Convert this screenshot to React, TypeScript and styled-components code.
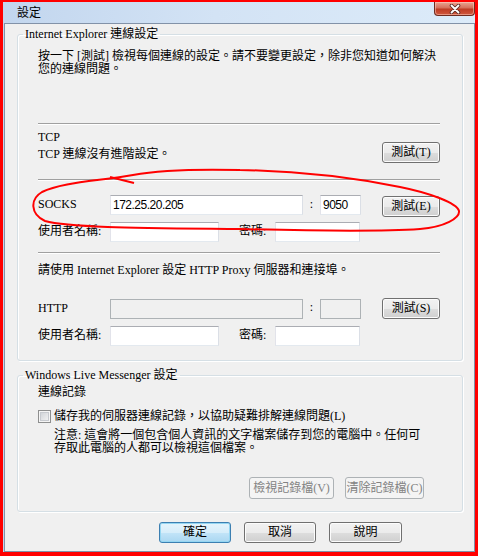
import React from "react";
import styled, { createGlobalStyle } from "styled-components";

const UI_FONT = `"Liberation Serif", "Noto Sans CJK TC", serif`;

const GlobalStyle = createGlobalStyle`
	html, body {
		margin: 0;
		padding: 0;
		background: #fff;
	}
	body {
		font-family: ${UI_FONT};
		font-size: 12px;
		color: #000;
	}
`;

const Page = styled.div`
	position: relative;
	width: 478px;
	height: 556px;
`;

const Window = styled.div`
	box-sizing: border-box;
	width: 478px;
	height: 556px;
	border-style: solid;
	border-color: #ff0000;
	border-width: 2px 3px 4px 3px;
	background: linear-gradient(to right, #c2d6ee 0%, #d3e3f5 45%, #dcebf9 100%);
	display: flex;
	flex-direction: column;
`;

const TitleBar = styled.div`
	height: 21px;
	display: flex;
	align-items: flex-start;
	padding-left: 14px;
`;

const Caption = styled.div`
	padding-top: 3px;
	line-height: 13px;
	font-family: "Noto Sans CJK TC", sans-serif;
	font-size: 12px;
`;

const CloseButton = styled.div`
	box-sizing: border-box;
	margin-left: auto;
	width: 41px;
	height: 14px;
	border: 1px solid #6e2b20;
	border-top: none;
	border-radius: 0 0 4px 4px;
	background: linear-gradient(#e8a593 0%, #d5705b 45%, #bf3c24 55%, #d0583e 100%);
	box-shadow: inset 0 0 0 1px rgba(255, 210, 195, 0.5);
	display: flex;
	align-items: center;
	justify-content: center;
`;

const Client = styled.div`
	flex: 1;
	margin-left: 1px;
	border: 1px solid #8292a8;
	background: #f0f0f0;
	padding: 4px 11px 0 12px;
	display: flex;
	flex-direction: column;
`;

const Group = styled.fieldset<{ $gap?: number }>`
	margin: ${(p) => p.$gap ?? 0}px 0 0 0;
	padding: 0;
	min-width: 0;
	border: 1px solid #d5dfe5;
	border-radius: 3px;
	box-shadow: inset 1px 1px 0 #fff, 1px 1px 0 #fff;
`;

const GroupTitle = styled.legend`
	margin-left: 5px;
	padding: 0 2px;
	line-height: 13px;
	font-size: 12px;
`;

const GroupBody = styled.div<{ $top: number; $bottom: number }>`
	padding: ${(p) => p.$top}px 22px ${(p) => p.$bottom}px 20px;
	display: flex;
	flex-direction: column;
`;

const Text = styled.div<{ $gap?: number; $lh?: number; $indent?: number }>`
	margin-top: ${(p) => p.$gap ?? 0}px;
	padding-left: ${(p) => p.$indent ?? 0}px;
	line-height: ${(p) => p.$lh ?? 13}px;
	white-space: nowrap;
`;

const Separator = styled.div<{ $gap: number }>`
	margin-top: ${(p) => p.$gap}px;
	border-top: 1px solid #a0a0a0;
	border-bottom: 1px solid #fff;
`;

const Row = styled.div<{ $gap: number }>`
	margin-top: ${(p) => p.$gap}px;
	display: flex;
	align-items: flex-start;
`;

const Label = styled.span<{ $width: number; $shift?: number; $lift?: number }>`
	width: ${(p) => p.$width}px;
	margin-left: ${(p) => p.$shift ?? 0}px;
	margin-top: ${(p) => p.$lift ?? 3}px;
	line-height: 13px;
	white-space: nowrap;
`;

const Colon = styled.span`
	width: 17px;
	text-align: center;
	margin-top: 3px;
	line-height: 13px;
`;

const TextBox = styled.input<{ $width: number; $offset?: number }>`
	box-sizing: border-box;
	width: ${(p) => p.$width}px;
	height: 20px;
	margin: ${(p) => p.$offset ?? 0}px 0 0 0;
	padding: 0 2px;
	border: 1px solid;
	border-color: #abadb3 #dbdfe6 #e3e9ef #e2e3ea;
	background: #fff;
	font-family: "Liberation Sans", "Noto Sans CJK TC", sans-serif;
	font-size: 12px;
	letter-spacing: -0.5px;
	color: #000;
	outline: none;

	&:disabled {
		background: #f0f0f0;
		border-color: #adb2b5;
	}
`;

const Button = styled.button<{ $width: number; $height?: number; $primary?: boolean; $offset?: number }>`
	box-sizing: border-box;
	width: ${(p) => p.$width}px;
	height: ${(p) => p.$height ?? 21}px;
	margin: ${(p) => p.$offset ?? 0}px 0 0 0;
	padding: 0;
	font-family: ${UI_FONT};
	font-size: 12px;
	line-height: 13px;
	color: #000;
	border: 1px solid ${(p) => (p.$primary ? "#3c7fb1" : "#707070")};
	border-radius: 3px;
	background: ${(p) =>
		p.$primary
			? "linear-gradient(#e5f4fc 0%, #d6edfa 50%, #c2e4f8 51%, #aad7f1 100%)"
			: "linear-gradient(#f2f2f2 0%, #ebebeb 50%, #dddddd 51%, #cfcfcf 100%)"};
	box-shadow: inset 0 0 0 1px ${(p) => (p.$primary ? "#95d6f2" : "#fcfcfc")};

	&:disabled {
		border-color: #adb2b5;
		background: #f4f4f4;
		box-shadow: inset 0 0 0 1px #f4f4f4;
		color: #838383;
	}
`;

const PushRight = styled.div`
	margin-left: auto;
	display: flex;
`;

const CheckRow = styled.div<{ $gap: number }>`
	margin-top: ${(p) => p.$gap}px;
	display: flex;
	align-items: center;
	gap: 3px;
	line-height: 13px;
	white-space: nowrap;
`;

const CheckBox = styled.span`
	box-sizing: border-box;
	width: 13px;
	height: 13px;
	border: 1px solid #8e8f8f;
	background: linear-gradient(135deg, #c9cdd2 0%, #e6e7e9 60%, #f7f7f7 100%);
	box-shadow: inset 0 0 0 1px #f5f5f5, inset 0 0 0 2px #c7cacf;
`;

const ButtonBar = styled.div<{ $gap: number; $pad: number; $right?: boolean }>`
	margin-top: ${(p) => p.$gap}px;
	display: flex;
	justify-content: ${(p) => (p.$right ? "flex-end" : "flex-start")};
	padding-left: ${(p) => (p.$right ? 0 : p.$pad)}px;
	padding-right: ${(p) => (p.$right ? p.$pad : 0)}px;
	gap: ${(p) => (p.$right ? 11 : 13)}px;
`;

const Annotation = styled.svg`
	position: absolute;
	top: 0;
	left: 0;
	pointer-events: none;
`;

const App: React.FC = () => {
	return (
		<Page>
			<GlobalStyle />
			<Window>
				<TitleBar>
					<Caption>設定</Caption>
					<CloseButton>
						<svg width="14" height="10" viewBox="0 0 14 10">
							<path d="M3.5 1.5 L10.5 8.5 M10.5 1.5 L3.5 8.5" stroke="#5a2c26" strokeWidth="3.6" strokeLinecap="round" />
							<path d="M3.5 1.5 L10.5 8.5 M10.5 1.5 L3.5 8.5" stroke="#fff" strokeWidth="1.8" strokeLinecap="round" />
						</svg>
					</CloseButton>
				</TitleBar>
				<Client>
					<Group>
						<GroupTitle>Internet Explorer 連線設定</GroupTitle>
						<GroupBody $top={9} $bottom={14}>
							<Text>
								按一下 [測試] 檢視每個連線的設定。請不要變更設定，除非您知道如何解決
								<br />
								您的連線問題。
							</Text>
							<Separator $gap={47} />
							<Row $gap={4}>
								<Text $lh={17}>
									TCP
									<br />
									TCP 連線沒有進階設定。
								</Text>
								<PushRight>
									<Button $width={58} $offset={13}>測試(T)</Button>
								</PushRight>
							</Row>
							<Separator $gap={16} />
							<Row $gap={14}>
								<Label $width={72}>SOCKS</Label>
								<TextBox $width={193} value="172.25.20.205" readOnly />
								<Colon>:</Colon>
								<TextBox $width={41} value="9050" readOnly />
								<PushRight>
									<Button $width={58} $offset={1}>測試(E)</Button>
								</PushRight>
							</Row>
							<Row $gap={5}>
								<Label $width={72}>使用者名稱:</Label>
								<TextBox $width={109} value="" readOnly />
								<Label $width={36} $shift={20}>密碼:</Label>
								<TextBox $width={85} value="" readOnly />
							</Row>
							<Separator $gap={10} />
							<Text $gap={10}>請使用 Internet Explorer 設定 HTTP Proxy 伺服器和連接埠。</Text>
							<Row $gap={21}>
								<Label $width={72} $lift={4}>HTTP</Label>
								<TextBox $width={193} $offset={1} value="" disabled />
								<Colon>:</Colon>
								<TextBox $width={41} $offset={1} value="" disabled />
								<PushRight>
									<Button $width={58}>測試(S)</Button>
								</PushRight>
							</Row>
							<Row $gap={7}>
								<Label $width={72}>使用者名稱:</Label>
								<TextBox $width={109} value="" readOnly />
								<Label $width={36} $shift={20}>密碼:</Label>
								<TextBox $width={85} value="" readOnly />
							</Row>
						</GroupBody>
					</Group>
					<Group $gap={8}>
						<GroupTitle>Windows Live Messenger 設定</GroupTitle>
						<GroupBody $top={4} $bottom={12}>
							<Text>連線記錄</Text>
							<CheckRow $gap={11}>
								<CheckBox />
								<span>儲存我的伺服器連線記錄，以協助疑難排解連線問題(L)</span>
							</CheckRow>
							<Text $gap={6} $indent={16}>
								注意: 這會將一個包含個人資訊的文字檔案儲存到您的電腦中。任何可
								<br />
								存取此電腦的人都可以檢視這個檔案。
							</Text>
							<ButtonBar $gap={22} $pad={16} $right>
								<Button $width={85} $height={22} disabled>
									檢視記錄檔(V)
								</Button>
								<Button $width={79} $height={22} disabled>
									清除記錄檔(C)
								</Button>
							</ButtonBar>
						</GroupBody>
					</Group>
					<ButtonBar $gap={10} $pad={142}>
						<Button $width={72} $primary>
							確定
						</Button>
						<Button $width={72}>取消</Button>
						<Button $width={73}>說明</Button>
					</ButtonBar>
				</Client>
			</Window>
			<Annotation width="478" height="556" viewBox="0 0 478 556">
				<path
					d="M240 170 C200 169 160 170 133 175 C100 181 62 182 42 192 C30 199 30 214 45 221 C70 228 150 228 240 229 C320 231 390 231 420 229 C445 227 460 218 459 211 C457 203 430 193 400 187 C360 179 300 171 240 170"
					fill="none"
					stroke="#f00"
					strokeWidth="2"
				/>
				<path d="M110 177 C118 179 126 181 134 183" fill="none" stroke="#f00" strokeWidth="2" />
			</Annotation>
		</Page>
	);
};

export default App;
